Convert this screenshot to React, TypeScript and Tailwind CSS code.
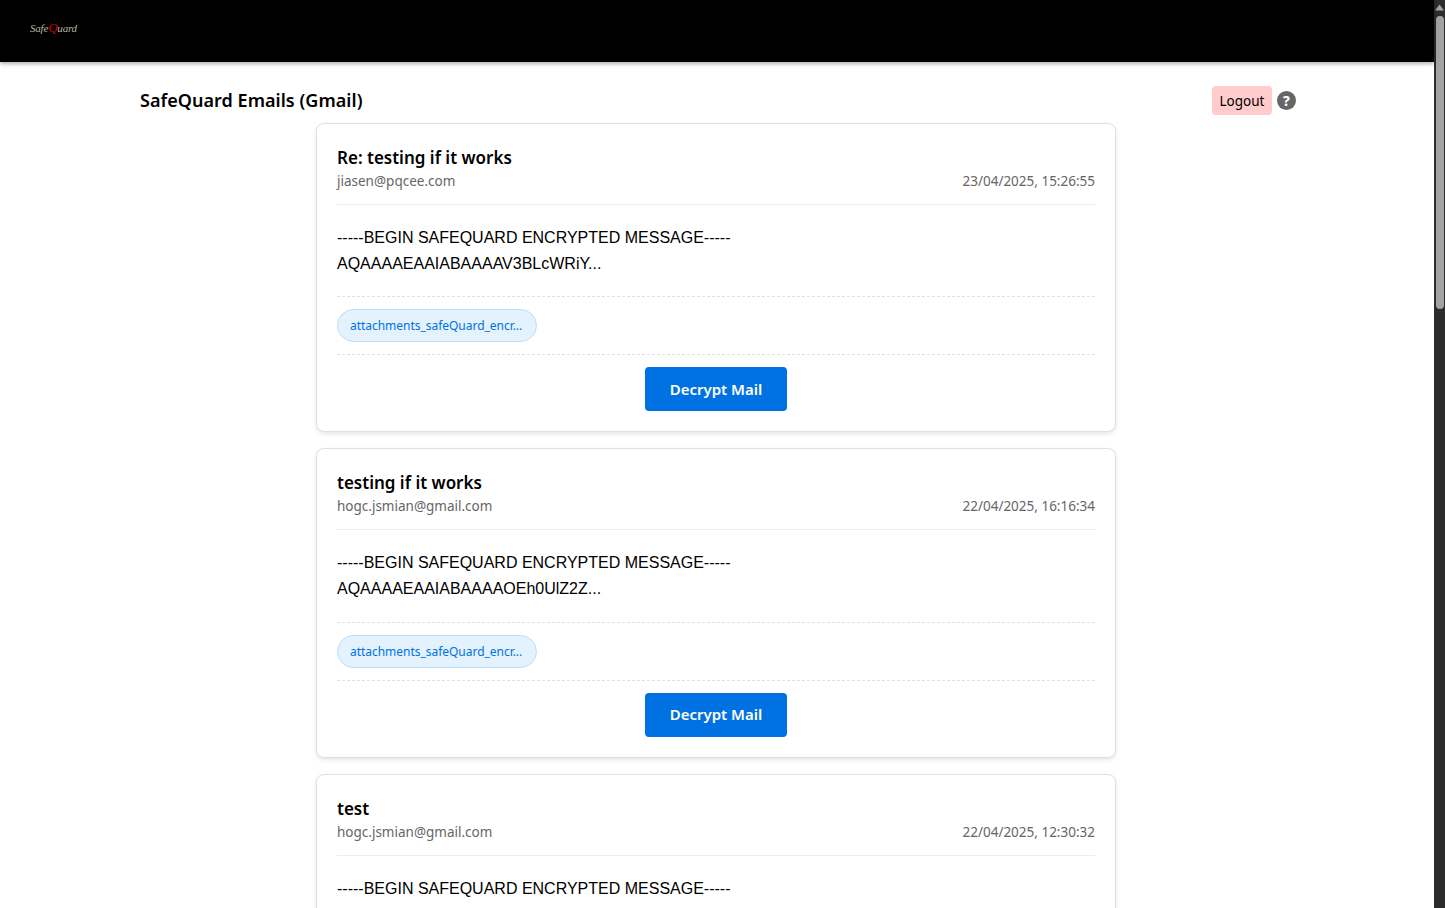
const ui = { fontFamily: '"Noto Sans", "Open Sans", sans-serif' };

function Mail({ subject, from, date, line2, attach = true }: { subject: string; from: string; date: string; line2: string; attach?: boolean }) {
  return (
    <div className="w-[800px] shrink-0 rounded-lg border border-[#e0e0e0] bg-white px-5 pt-5 pb-[20.4px] shadow-[0_2px_4px_rgba(0,0,0,0.1)]">
      <div className="border-b border-[#eeeeee] pb-[12px]">
        <h3 className="text-[17px] leading-[27px] font-semibold text-black">{subject}</h3>
        <div className="flex justify-between text-[13.5px] leading-[21px] text-[#666666]">
          <span>{from}</span>
          <span>{date}</span>
        </div>
      </div>
      <div className="pt-[20px] pb-[19.2px] text-[16px] leading-[26px] text-black" style={{ fontFamily: '"Liberation Sans", Arial, sans-serif' }}>
        <div>-----BEGIN SAFEQUARD ENCRYPTED MESSAGE-----</div>
        <div>{line2}</div>
      </div>
      {attach && (
        <>
          <div className="border-t border-dashed border-[#e0e0e0] py-3">
            <div className="flex h-[33px] w-[200px] items-center rounded-full border border-[#bbdefb] bg-[#e3f2fd] px-3 pt-[2px] text-[12px] tracking-[-0.03px] text-[#0071e3]">
              attachments_safeQuard_encr...
            </div>
          </div>
          <div className="flex justify-center border-t border-dashed border-[#e0e0e0] pt-3">
            <button className="h-11 w-[142px] rounded bg-[#0071e3] text-[15px] font-semibold text-white">Decrypt Mail</button>
          </div>
        </>
      )}
    </div>
  );
}

export default function App() {
  return (
    <div className="flex h-[908px] w-full overflow-hidden bg-white" style={ui}>
      <div className="flex min-w-0 flex-1 flex-col">
        <nav className="relative z-10 flex h-[62px] shrink-0 items-center bg-black pb-[7px] pl-[30px] shadow-[0_2px_4px_rgba(0,0,0,0.3)]">
          <span className="text-[11px] tracking-[-0.2px] text-[#b5b5ac] italic" style={{ fontFamily: '"Liberation Serif", serif' }}>
            Safe<span className="text-[13px] text-[#d00000]">Q</span>uard
          </span>
        </nav>
        <div className="flex flex-col pt-6 pr-[138px] pl-[140px]">
          <div className="flex h-[29px] shrink-0 items-center justify-between">
            <h2 className="text-[18px] tracking-[0.04px] font-semibold text-black">SafeQuard Emails (Gmail)</h2>
            <div className="flex items-center gap-[5px]">
              <button className="h-[29px] w-[60px] rounded bg-[#ffcccb] pt-px text-[13.5px] text-black">Logout</button>
              <span className="flex h-[19px] w-[19px] items-center justify-center rounded-full bg-[#666666] text-[14px] leading-none font-extrabold text-white">?</span>
            </div>
          </div>
          <div className="mt-[7.8px] flex flex-col items-center gap-4 pr-[4px]">
            <Mail subject="Re: testing if it works" from="jiasen@pqcee.com" date="23/04/2025, 15:26:55" line2="AQAAAAEAAIABAAAAV3BLcWRiY..." />
            <Mail subject="testing if it works" from="hogc.jsmian@gmail.com" date="22/04/2025, 16:16:34" line2="AQAAAAEAAIABAAAAOEh0UlZ2Z..." />
            <Mail subject="test" from="hogc.jsmian@gmail.com" date="22/04/2025, 12:30:32" line2="AQAAAAEAAIABAAAAUzdSTzJ6b..." />
          </div>
        </div>
      </div>
      <div className="flex w-[11px] shrink-0 flex-col items-center bg-[#2c2c2c]">
        <svg width="9" height="7" viewBox="0 0 9 7" className="mt-[4px] shrink-0"><path d="M4.5 0.5 L9 6.5 H0 Z" fill="#a3a3a3" /></svg>
        <div className="mt-[5px] h-[293px] w-[8px] rounded-full bg-[#a3a3a3]" />
      </div>
    </div>
  );
}
